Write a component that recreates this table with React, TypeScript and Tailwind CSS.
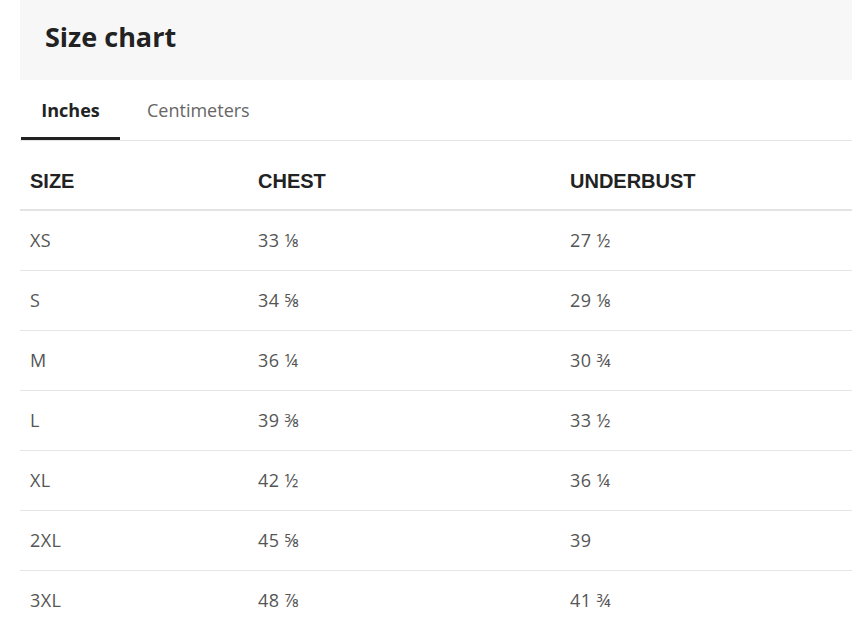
import React, { useState } from "react";

const rows: [string, string, string][] = [
  ["XS", "33 ⅛", "27 ½"],
  ["S", "34 ⅝", "29 ⅛"],
  ["M", "36 ¼", "30 ¾"],
  ["L", "39 ⅜", "33 ½"],
  ["XL", "42 ½", "36 ¼"],
  ["2XL", "45 ⅝", "39"],
  ["3XL", "48 ⅞", "41 ¾"],
];

const App: React.FC = () => {
  const [tab, setTab] = useState("in");

  return (
    <div className="w-[852px] h-[627px] overflow-hidden bg-white pl-5 font-['Open_Sans',sans-serif]">
      <div className="h-20 bg-[#f7f7f7] pl-[25px] pb-[5px] flex items-center">
        <h1 className="text-[27px] font-bold text-[#222]">Size chart</h1>
      </div>

      <div className="flex border-b border-[#e5e5e5] h-[61px]">
        <button
          onClick={() => setTab("in")}
          className={`w-[99px] ml-px text-[18px] flex items-center justify-center pt-1 border-b-[3px] ${
            tab === "in" ? "font-bold text-[#222] border-[#222]" : "text-[#666] border-transparent"
          }`}
        >
          Inches
        </button>
        <button
          onClick={() => setTab("cm")}
          className={`ml-[7px] px-5 text-[18px] flex items-center pt-1 border-b-[3px] ${
            tab === "cm" ? "font-bold text-[#222] border-[#222]" : "text-[#666] border-transparent"
          }`}
        >
          Centimeters
        </button>
      </div>

      <table className="w-full border-collapse">
        <thead>
          <tr className="h-[69px] border-b-2 border-[#e3e3e3]">
            <th className="w-[228px] pl-[10px] text-left font-['Liberation_Sans',Arial,sans-serif] font-bold text-[20px] text-[#222] pt-[12px]">
              SIZE
            </th>
            <th className="w-[312px] pl-[10px] text-left font-['Liberation_Sans',Arial,sans-serif] font-bold text-[20px] text-[#222] pt-[12px]">
              CHEST
            </th>
            <th className="pl-[10px] text-left font-['Liberation_Sans',Arial,sans-serif] font-bold text-[20px] text-[#222] pt-[12px]">
              UNDERBUST
            </th>
          </tr>
        </thead>
        <tbody>
          {rows.map((r) => (
            <tr key={r[0]} className="h-[60px] border-b border-[#e5e5e5] text-[18px] tracking-[0.4px] text-[#555]">
              <td className="pl-[10px]">{r[0]}</td>
              <td className="pl-[10px]">{r[1]}</td>
              <td className="pl-[10px]">{r[2]}</td>
            </tr>
          ))}
        </tbody>
      </table>
    </div>
  );
};

export default App;
